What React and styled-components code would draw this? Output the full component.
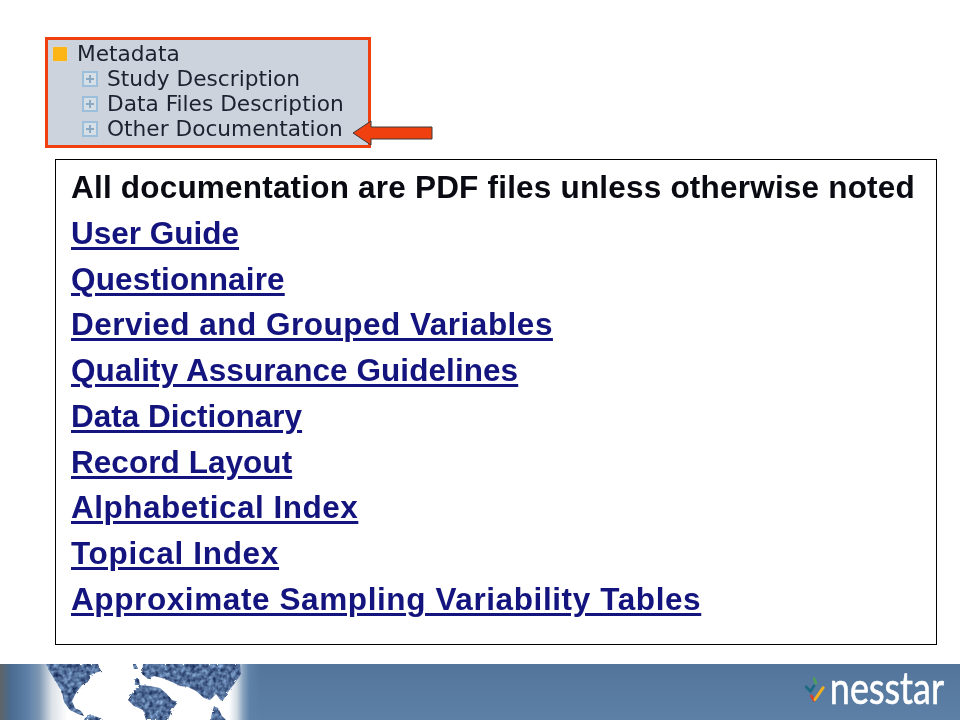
import styled, { createGlobalStyle } from 'styled-components';

const GlobalStyle = createGlobalStyle`
	html, body {
		margin: 0;
		padding: 0;
		background: #fff;
	}
`

const Page = styled.div`
	position: relative;
	width: 960px;
	height: 720px;
	display: flex;
	flex-direction: column;
	background: #fff;
`

const Top = styled.div`
	position: relative;
	flex: none;
	padding: 37px 0 0 45px;
	height: 122px;
`

const TreeBox = styled.div`
	width: 326px;
	height: 111px;
	box-sizing: border-box;
	border: 3px solid #f0400f;
	background: #ccd3dd;
	padding: 1px 0 0 5px;
	font-family: "DejaVu Sans", Verdana, sans-serif;
	font-size: 21.7px;
	color: #1c2230;
`

const TreeRow = styled.div`
	display: flex;
	align-items: center;
	height: 25px;
	padding-left: ${props => props.$child ? '29px' : '0'};
	gap: ${props => props.$child ? '9px' : '10px'};
	white-space: nowrap;
	filter: blur(0.3px);
`

const Bullet = styled.span`
	width: 14px;
	height: 14px;
	border-radius: 1px;
	background: #fdb515;
	box-shadow: 0 0 2px #f5e0a8;
`

const Plus = styled.span`
	position: relative;
	width: 16px;
	height: 16px;
	box-sizing: border-box;
	border: 2px solid #9cc0dc;
	background: #d6dee6;

	&::before, &::after {
		content: "";
		position: absolute;
		background: #8aa9c4;
	}
	&::before {
		left: 2px;
		right: 2px;
		top: 5px;
		height: 2px;
	}
	&::after {
		top: 2px;
		bottom: 2px;
		left: 5px;
		width: 2px;
	}
`

const Arrow = styled.svg`
	position: absolute;
	left: 352px;
	top: 119px;
`

const Panel = styled.div`
	flex: none;
	margin: 0 0 0 55px;
	width: 882px;
	height: 486px;
	box-sizing: border-box;
	border: 1px solid #000;
	padding: 5px 0 0 15px;
	font-family: "Liberation Sans", Arial, sans-serif;
	font-weight: bold;
	font-size: 31.5px;
	line-height: 45.75px;
`

const Note = styled.div`
	color: #0a0a12;
	letter-spacing: 0.2px;
	white-space: nowrap;
	filter: blur(0.35px);
`

const DocLink = styled.a`
	display: block;
	width: fit-content;
	color: #14147e;
	letter-spacing: ${props => props.$track}px;
	text-decoration: underline;
	text-decoration-thickness: 3px;
	text-underline-offset: 3px;
	white-space: nowrap;
	filter: blur(0.35px);
`

const Banner = styled.div`
	position: relative;
	flex: none;
	margin-top: 19px;
	height: 56px;
	display: flex;
	justify-content: flex-end;
	align-items: center;
	padding-right: 15px;
	gap: 4px;
	background: linear-gradient(180deg, #53759b 0%, #5d80a6 100%);
`

const WorldGlow = styled.div`
	position: absolute;
	left: 0;
	top: 0;
	width: 260px;
	height: 56px;
	background: linear-gradient(90deg, #5f6367 0%, #4a6a8e 4%, #5b7ea6 10%, #7e97b3 15%, #dde2e8 20%, #fff 26%, #fff 88%, #d4dde6 91%, #8aa4bf 93.5%, #5f82a8 96%, rgba(90, 125, 163, 0) 100%);
`

const WorldMap = styled.svg`
	position: absolute;
	left: 0;
	top: 0;
`

const LogoMark = styled.svg`
	flex: none;
	margin-top: -6px;
`

const LogoText = styled.span`
	font-family: "Lato", "Open Sans", sans-serif;
	font-size: 36px;
	line-height: 34px;
	font-weight: 400;
	color: #fff;
	-webkit-text-stroke: 0.5px #fff;
	transform: scaleY(1.25);
	margin-top: -12px;
	padding: 0 1px;
`

const docs = [
	{ label: 'User Guide', track: 0 },
	{ label: 'Questionnaire', track: 0.15 },
	{ label: 'Dervied and Grouped Variables', track: 0.5 },
	{ label: 'Quality Assurance Guidelines', track: 0.07 },
	{ label: 'Data Dictionary', track: 0 },
	{ label: 'Record Layout', track: 0.05 },
	{ label: 'Alphabetical Index', track: 0.5 },
	{ label: 'Topical Index', track: 0.7 },
	{ label: 'Approximate Sampling Variability Tables', track: 0.6 },
]

const tree = ['Study Description', 'Data Files Description', 'Other Documentation']

export default function App() {
	return (
		<Page>
			<GlobalStyle />
			<Top>
				<TreeBox>
					<TreeRow><Bullet />Metadata</TreeRow>
					{tree.map(item => (
						<TreeRow $child key={item}><Plus />{item}</TreeRow>
					))}
				</TreeBox>
				<Arrow width="82" height="28" viewBox="0 0 82 28">
					<path d="M1 14 L19 2 V8 H80 V20 H19 V26 Z" fill="#f0400f" stroke="#3a3a3a" strokeWidth="1" />
				</Arrow>
			</Top>

			<Panel>
				<Note>All documentation are PDF files unless otherwise noted</Note>
				{docs.map(doc => (
					<DocLink $track={doc.track} key={doc.label}>{doc.label}</DocLink>
				))}
			</Panel>

			<Banner>
				<WorldGlow />
				<WorldMap width="260" height="56" viewBox="0 0 260 56">
					<defs>
						{/* rough coastline, then mottled blue noise clipped to the land */}
						<filter id="land" x="-5%" y="-5%" width="110%" height="110%" colorInterpolationFilters="sRGB">
							<feTurbulence type="fractalNoise" baseFrequency="0.3" numOctaves="2" seed="4" result="edge" />
							<feDisplacementMap in="SourceGraphic" in2="edge" scale="3" result="shape" />
							<feTurbulence type="fractalNoise" baseFrequency="0.22" numOctaves="2" seed="9" />
							<feColorMatrix type="matrix" values="0.7 0 0 0 -0.03  0.8 0 0 0 0.03  0.8 0 0 0 0.2  0 0 0 0 1" />
							<feComposite in2="shape" operator="in" />
							<feGaussianBlur stdDeviation="0.5" />
						</filter>
					</defs>
					<g filter="url(#land)" fill="#000">
						<path d="M46 0 H98 L101 7 L92 10 L88 18 L82 21 L76 29 L72 37 L75 44 L81 47 L84 52 L78 50 L70 46 L64 38 L62 28 L56 18 L50 8 Z" />
						<path d="M85 54 L92 51 L100 54 L103 56 H84 Z" />
						<path d="M143 0 H240 L241 10 L234 20 L228 28 L222 38 L216 30 L210 36 L204 34 L196 27 L188 23 L180 22 L172 18 L162 14 L154 12 L148 15 L142 10 Z" />
						<path d="M134 26 L140 21 L150 22 L160 24 L167 30 L172 36 L178 38 L172 46 L168 56 H146 L143 46 L134 42 L128 36 Z" />
						<path d="M133 1 L137 1 L138 5 L134 5 Z" />
						<path d="M134 15 L139 15 L140 21 L135 21 Z" />
						<path d="M214 42 L218 44 L222 52 L226 56 H210 Z" />
					</g>
				</WorldMap>
				<LogoMark width="20" height="25" viewBox="0 0 22 26">
					<path d="M1 10 L6 15 L10 9" fill="none" stroke="#1d6a80" strokeWidth="3" strokeLinecap="round" />
					<path d="M10 1 L12 6" fill="none" stroke="#4f9e5a" strokeWidth="3" strokeLinecap="round" />
					<path d="M7 20 L10 25" fill="none" stroke="#d8402a" strokeWidth="3" strokeLinecap="round" />
					<path d="M11 24 L20 11" fill="none" stroke="#f2b01e" strokeWidth="3.2" strokeLinecap="round" />
				</LogoMark>
				<LogoText>nesstar</LogoText>
			</Banner>
		</Page>
	)
}
